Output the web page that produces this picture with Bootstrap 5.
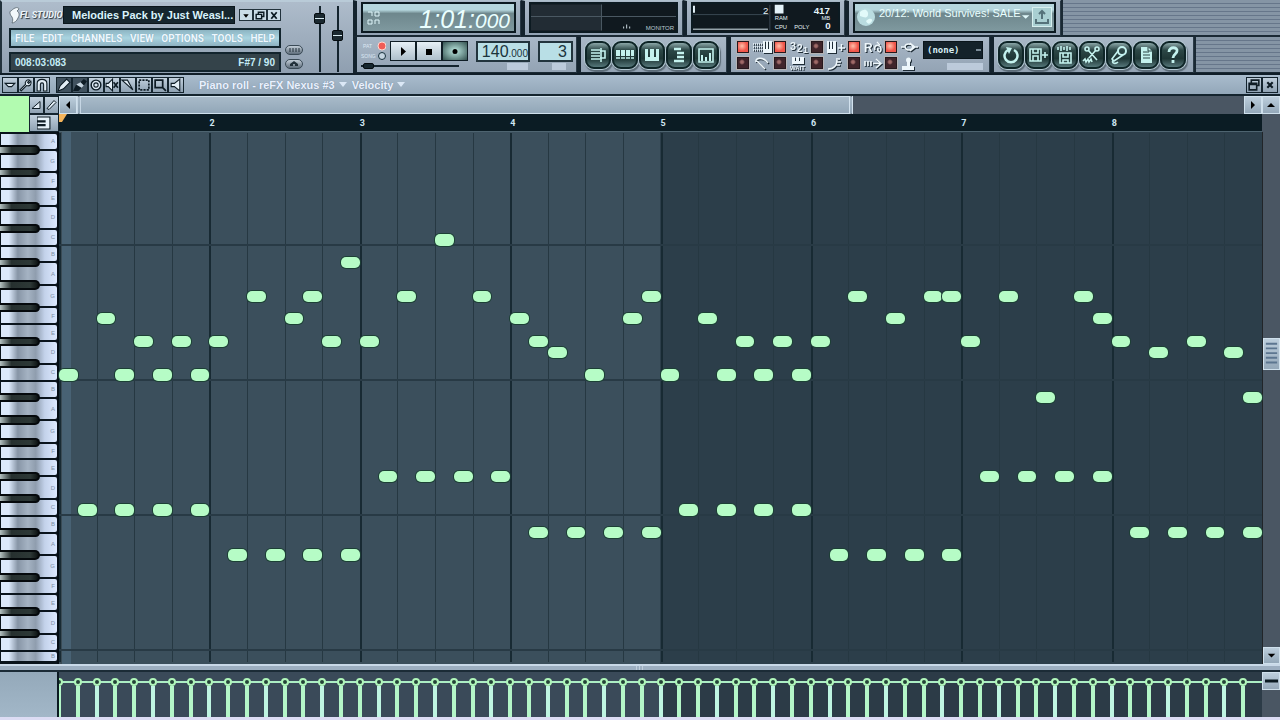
<!DOCTYPE html>
<html lang="en">
<head>
<meta charset="utf-8">
<meta name="viewport" content="width=device-width, initial-scale=1">
<title>FL Studio - Piano roll</title>
<link rel="stylesheet" href="https://cdn.jsdelivr.net/npm/bootstrap@5.3.0/dist/css/bootstrap.min.css">
<style>
:root{--steel:#9aa9b9;--sans:"Liberation Sans",Arial,sans-serif;--slim:Roboto,"Liberation Sans",sans-serif}
body{background:#2c3e4a;font-family:var(--sans);font-size:12px;line-height:1;overflow-x:hidden}
button,select,input{padding:0;margin:0;border-radius:0;font-family:inherit}
svg{display:block}
.deck{background:var(--steel);border-bottom:2px solid #101e28;height:75px;overflow:hidden}
.main-panel{width:353px;background:linear-gradient(#aebccb,#8f9fb0);border-top:2px solid #b9cbd8;border-left:2px solid #22323c;padding-left:7px}
.main-left{width:272px}
.brand{width:54px;font:italic bold 9px var(--slim);color:#eef6fa;text-shadow:1px 1px 1px #22303a}
.song{background:#16262e;color:#d9f3fb;font:bold 11px var(--sans);height:18px;border:1px solid #0b161c;min-width:0}
.tiny{width:14px;height:12px;background:#cbdde8;border:1px solid #22323c;color:#0b1a22}
.menu-strip{height:20px;border:2px solid #12242d;background:linear-gradient(#8db4c2,#a9d4e0 50%,#8eb2c2)}
.menu-strip button{background:none;border:0;color:#eef8ff;font:bold 10px var(--slim);text-shadow:0 0 1px #7294a8}
.hint{height:20px;border:2px solid #12242d;background:#34434a;color:#c4ecf6;font:bold 10px var(--sans)}
.pill{width:18px;height:10px;border-radius:5px;border:1px solid #3a4a56;background:linear-gradient(#c3ced8,#5d6c7a)}
.fader{width:18px;height:66px}
.fader input{width:66px;height:12px;transform:rotate(-90deg);flex-shrink:0}
input[type=range]{appearance:none;-webkit-appearance:none;background:none}
input[type=range]::-webkit-slider-runnable-track{height:2px;background:#14242e}
input[type=range]::-webkit-slider-thumb{-webkit-appearance:none;width:11px;height:11px;margin-top:-5px;border:1px solid #050c10;border-radius:2px;background:linear-gradient(90deg,#1b2930 40%,#d5e8ee 40% 60%,#1b2930 60%)}
.tempo-slide{width:98px;height:8px}
.tempo-slide::-webkit-slider-thumb{height:6px!important;margin-top:-2px!important;background:#16262e!important}
.pan{background:linear-gradient(#a9b8c7,#93a3b4);border-left:4px solid #14232d;border-right:1px solid #2a3a46;height:37px;border-bottom:2px solid #1a2934}
.pan-top{border-top:1px solid #aebfcc}
.ridges{height:37px;border-bottom:2px solid #1a2934;border-left:2px solid #1a2934;background:repeating-linear-gradient(#8595a5 0 3px,#66768a 3px 4px)}
.w-a{width:168px}.w-b{width:162px}.w-c{width:162px}.w-d{width:216px}
.w-e{width:224px}.w-f{width:150px}.w-g{width:263px}.w-h{width:204px}
.screen{border:2px solid #0c1a21;height:31px;margin-top:1px}
.lcd{background:linear-gradient(#b5d6dd 0 22%,#6e878d 35%,#7f999f);color:#eaffff;font:italic 25px var(--sans)}
.lcd small{font-size:21px}
.lcd-time{padding-top:3px}
.blk{background:#10191f;color:#dcecf4}
.play{width:26px;height:20px;border:1px solid #0f1d25;background:linear-gradient(#e6f0f6,#aebfcb)}
.play.rec-on{background:radial-gradient(#bdeae2,#33514f)}
.num{height:21px;border:2px solid #22343d;background:#b9dfe6;color:#1a343c;font:16px var(--sans);line-height:17px}
.num span{font-size:10px}
.tag{height:7px;background:#c6d3e4;opacity:.8}
.tempo{width:54px}.patnum{width:35px}.tg1{width:21px}.tg2{width:14px}
.news{font:11px var(--sans);line-height:12px;padding-top:3px}
.dl{width:20px;height:20px;margin:3px 2px;background:#a9cfd2;border:1px solid #d7f0f0}
.orbs{gap:1px;padding-left:4px}
.orb{width:26px;height:28px;flex-shrink:0;padding:1px;border:2px solid #0e2527;border-radius:9px;background:linear-gradient(#8ba7a8,#2c4746 30%,#1f3736 65%,#56777a);box-shadow:0 0 0 1px #b4c8d2,1px 2px 1px 1px #5c6c78;color:#c4f2ee}
.orb svg{width:20px;height:20px}
.led{appearance:none;-webkit-appearance:none;width:12px;height:12px;border:1px solid #26191e;outline:1px solid #b6b2b4;background:radial-gradient(circle at 40% 40%,#a06a68 0 15%,#40242a 35%)}
.led:checked{background:radial-gradient(circle at 40% 40%,#ffc0aa,#f0564a 60%)}
.opts{width:192px;padding-left:6px;row-gap:1px}
.opt{width:37px;gap:4px}
.opt svg{width:19px;height:13px;color:#edf6fb;filter:drop-shadow(1px 1px 0 #1d2b35)}
.pat{width:60px;height:18px;background:linear-gradient(#7b8c98,#7b8c98) 52px 7px/5px 2px no-repeat #14222a;color:#d8eef4;border:1px solid #0a151b;font:bold 9px "DejaVu Sans Mono",monospace;appearance:none;-webkit-appearance:none;padding-left:3px}
.titlebar{height:21px;background:linear-gradient(#a9bccd,#93a7b9);border-bottom:2px solid #14242e;padding:0 2px}
.tool{width:16px;height:16px;border:1px solid #14242e;background:linear-gradient(#c1d0dd,#8fa2b3);color:#0e1c25}
.tool.down{background:#41525f;color:#eef6fa}
.tool svg{width:14px;height:14px}
.toolset{margin-left:6px}
.caption{padding-left:15px}
.caption button{background:none;border:0;color:#eaf1ff;font:bold 11px var(--sans);text-shadow:0 0 1px #6a7f92}
.left-col{width:59px}.right-col{width:18px}
.upper{height:36px}
.swatch{width:29px;flex-shrink:0;background:#b2fbb0}
.half{width:15px}
.thumb-h{flex:0 1 64.500%;background:linear-gradient(#a8bac9,#92a7b8);border:1px solid #cfe0ec;border-right:4px double #d2e2ee;border-left:4px double #c6d6e4}
.track{background:#4a5663}
.sbtn{background:linear-gradient(#bccedc,#94a8b9);border:1px solid #cfe0ec;color:#0b1a22}
.side-arrow{width:18px;height:18px}
.ruler{height:18px;background:#0b1c24;color:#cfe6f2;border-bottom:1px solid #4e6470;display:grid;grid-template-columns:repeat(8,1fr);font:bold 9px var(--slim);line-height:18px}
.marker{width:8px;height:9px}
.keys{display:grid;grid-template-rows:repeat(94,1fr);grid-template-columns:40px 1fr;border-right:2px solid #050d14;padding:1px 0 2px;background:#0a141c}
.wkey{grid-column:1/3;min-height:0;margin:1px 0 1px 1px;border-radius:0 2px 2px 0;background:linear-gradient(90deg,#dce9fb 0 14%,#8795a6 30%,#a5b3c3 48%,#8f9dae 62%,#c3d2ea 78%,#dde9ff);display:flex;align-items:center;justify-content:flex-end;padding-right:2px;font-size:6px;color:#8091a8}
.bkey{grid-column:1;min-height:0;margin:1px 0;z-index:1;border:2px solid #05090c;border-left:0;border-radius:0 5px 5px 0;background:linear-gradient(90deg,#b5c2c2,#26302f 30%,#2d3836 80%,#0c1212)}
.score{display:grid;grid-template-columns:repeat(64,1fr);grid-template-rows:repeat(47,1fr);padding:1px 0 2px;background:linear-gradient(90deg,#3a4b55 0 3px,#486274 3px 1%,#3b4f5c 1% 50%,#2c3e4a 50%);min-width:0}
.beat{grid-row:1/-1;border-left:1px solid #263842}
.beat.bar{border-left:2px solid #182a33}
.oct{grid-column:1/-1;border-bottom:2px solid #283a45}
.note{min-width:0;min-height:0;border-radius:5px;background:#b6fcc6;box-shadow:0 0 0 1px #1c4035;z-index:1}
.vspace-a{flex:205 0 0}.vspace-b{flex:276 0 0}.vthumb{height:32px}
.split{height:8px;background:#9dafc1;border-top:2px solid #c9d9e8;border-bottom:2px solid #1b2b36}
.lane{height:48px;border-bottom:3px solid #dcdcf4}
.vel-side{background:linear-gradient(#94a9ba,#a2b7c8);border-right:2px solid #0b1a22}
.vels{display:grid;grid-template-columns:repeat(64,1fr);overflow:hidden;background:linear-gradient(#aceec4,#aceec4) 0 9px/100% 2px no-repeat,linear-gradient(90deg,#3a4a59 0 50%,#2c3b47 50%)}
.vel{margin-top:6px;width:8px;margin-left:-4px}
.vel::before{content:"";display:block;width:8px;height:8px;border:2px solid #b0f6ba;border-radius:50%;background:#244238}
.vel::after{content:"";display:block;width:4px;height:31px;margin-left:2px;background:#b4f6c8}
.vel:nth-child(3n)::after{background:#bff5e2}
</style>
</head>
<body>
<div class="d-flex flex-column min-vh-100">

<header class="deck d-flex flex-shrink-0">
  <section class="main-panel d-flex flex-shrink-0">
    <div class="main-left d-flex flex-column flex-shrink-0 pt-1 gap-1 justify-content-between pb-1">
      <div class="d-flex align-items-center">
        <div class="brand d-flex align-items-center flex-shrink-0">
          <svg class="flex-shrink-0" width="11" height="17" viewBox="0 0 11 17"><path d="M6 1C8 0 10 1 10 2L8 4c2 1 3 4 1 7-1 3-4 5-6 5 1-2 1-4 0-6C1 8 0 4 2 4c1-1 2-2 4-3z" fill="#f2f8fb" stroke="#46545e" stroke-width=".7"/></svg><span class="text-nowrap">FL STUDIO</span></div>
        <div class="song flex-fill text-nowrap d-flex align-items-center ps-2">Melodies Pack by Just Weasl...</div>
        <div class="d-flex ms-1 flex-shrink-0">
          <button class="tiny" aria-label="Minimize"><svg viewBox="0 0 11 10"><path d="M3 4h5l-2.500 3z"/></svg></button>
          <button class="tiny" aria-label="Restore"><svg viewBox="0 0 11 10"><path d="M4 4V2h5v4H7M2 4h5v4H2z" fill="none" stroke="currentColor" stroke-width="1.300"/></svg></button>
          <button class="tiny" aria-label="Close"><svg viewBox="0 0 11 10"><path d="M3 2l5 6M8 2L3 8" stroke="currentColor" stroke-width="1.600"/></svg></button>
        </div>
      </div>
      <nav class="menu-strip d-flex align-items-center justify-content-between px-1 flex-shrink-0">
        <button>FILE</button><button>EDIT</button><button>CHANNELS</button><button>VIEW</button><button>OPTIONS</button><button>TOOLS</button><button>HELP</button>
      </nav>
      <div class="hint d-flex align-items-center justify-content-between px-1 flex-shrink-0"><span>008:03:083</span><span>F#7 / 90</span></div>
    </div>
    <div class="d-flex flex-column justify-content-end gap-1 pb-1 ms-1">
      <button class="pill" aria-label="Typing keyboard"><svg viewBox="0 0 16 8"><path d="M4 2v4M7 2v4M10 2v4M13 2v4" stroke="#22303a"/></svg></button>
      <button class="pill" aria-label="Follow playback"><svg viewBox="0 0 16 8"><path d="M4 6V4l4-3 4 3v2H9V4H7v2z" fill="#22303a"/></svg></button>
    </div>
    <div class="d-flex ps-2 pt-1">
      <label class="fader d-flex align-items-center justify-content-center"><input type="range" aria-label="Volume" min="0" max="100" value="88"></label>
      <label class="fader d-flex align-items-center justify-content-center"><input type="range" aria-label="Pitch" min="0" max="100" value="57"></label>
    </div>
  </section>

  <div class="flex-fill d-flex flex-column">
    <div class="d-flex">
      <section class="pan pan-top w-a px-1"><div class="screen lcd d-flex align-items-center justify-content-between px-1">
        <svg width="14" height="16" viewBox="0 0 14 16" fill="none" stroke="#dff6fa"><path d="M1 2h4v4M8 2h4v4H8zM1 10h4v4H1zM8 14v-4h4v4"/></svg>
        <span class="text-nowrap lcd-time">1:01:<small>000</small></span></div></section>
      <section class="pan pan-top w-b px-1"><div class="screen blk d-flex">
        <svg class="w-100 h-100" viewBox="0 0 144 26"><path d="M0 0h70v26H0z" fill="#222c34"/><path d="M70 0v26M0 12h144" stroke="#4a5862"/><path d="M92 24v-2m3 2v-4m3 4v-2" stroke="#c7d5dc"/><text x="114" y="25" font-size="6" fill="#b9c9d2" font-family="Liberation Sans">MONITOR</text></svg></div></section>
      <section class="pan pan-top w-c px-1"><div class="screen blk d-flex">
        <svg class="w-100 h-100" viewBox="0 0 149 26" fill="#e4f2f8" font-family="Liberation Sans" font-size="6"><path d="M0 1h2v7H0zM84 0h9v9h-9z"/><path d="M0 25h77" stroke="#dcecf4"/><path d="M0 10h78M79 0v26" stroke="#3a4852"/><text x="72" y="9" font-size="10">2</text><text x="124" y="9" font-size="10" font-weight="bold">417</text><text x="84" y="16">RAM</text><text x="132" y="16">MB</text><text x="84" y="25">CPU</text><text x="104" y="25">POLY</text><text x="136" y="25" font-size="10" font-weight="bold">0</text></svg></div></section>
      <section class="pan pan-top w-d px-1"><div class="screen lcd d-flex align-items-start justify-content-between">
        <svg class="flex-shrink-0" width="24" height="24" viewBox="0 0 24 24"><circle cx="11" cy="13" r="9" fill="#b9dce0"/><path d="M5 8c5-5 9-1 8 3s-4 2-8 1zM11 17c4-4 7-2 6 0-2 3-4 4-6 0z" fill="#e2fafa"/></svg>
        <span class="news text-nowrap fst-normal">20/12: World Survives! SALE</span>
        <svg class="mt-2" width="10" height="10" viewBox="0 0 10 10"><path d="M1 3h8L5 7z" fill="#e0f8fa"/></svg>
        <button class="dl" aria-label="Download"><svg width="18" height="18" viewBox="0 0 18 18"><path d="M9 3v8M6 6l3-3 3 3M3 11v4h12v-4" fill="none" stroke="#55727a" stroke-width="2"/></svg></button></div></section>
      <div class="ridges flex-fill"></div>
    </div>
    <div class="d-flex">
      <section class="pan w-e ps-1 d-flex flex-column pt-1">
        <div class="d-flex">
          <svg class="me-1" width="25" height="20" viewBox="0 0 25 20" fill="#dce8f4" font-family="Liberation Sans" font-size="5"><text x="2" y="7">PAT</text><text x="0" y="17">SONG</text><circle cx="21" cy="5" r="4" fill="#f05c56" stroke="#ffd8d0"/><circle cx="21" cy="15" r="3.500" fill="#c4d4e0" stroke="#17303c"/></svg>
          <button class="play" aria-label="Play"><svg viewBox="0 0 24 17"><path d="M10 4v9l5-4.500z"/></svg></button>
          <button class="play" aria-label="Stop"><svg viewBox="0 0 24 17"><path d="M9 6h6v6H9z"/></svg></button>
          <button class="play rec-on" aria-label="Record"><svg viewBox="0 0 24 17"><circle cx="12" cy="8.500" r="2.500"/></svg></button>
          <div class="num ms-2 text-end text-nowrap tempo">140<span>.000</span></div>
          <div class="num ms-2 text-end pe-1 patnum">3</div>
        </div>
        <div class="d-flex align-items-center"><input class="tempo-slide" type="range" aria-label="Song position" value="2"><span class="tag ms-5 tg1"></span><span class="tag ms-4 tg2"></span></div>
      </section>
      <section class="pan w-f d-flex align-items-center orbs" id="windows"></section>
      <section class="pan w-g d-flex pt-1">
        <div class="opts d-flex flex-wrap" id="opts"></div>
        <div class="flex-shrink-0"><select class="pat" aria-label="Pattern"><option>(none)</option></select><div class="tag ms-4 mt-1"></div></div>
      </section>
      <section class="pan w-h d-flex align-items-center orbs" id="actions"></section>
      <div class="ridges flex-fill"></div>
    </div>
  </div>
</header>

<main class="flex-fill d-flex flex-column">
  <div class="titlebar d-flex align-items-center flex-shrink-0">
    <div class="d-flex" id="tools1"></div>
    <div class="d-flex toolset" id="tools2"></div>
    <div class="caption d-flex align-items-center gap-1">
      <button>Piano roll - reFX Nexus #3</button><svg width="9" height="6" viewBox="0 0 9 6"><path d="M0 0h8L4 5z" fill="#dbe8f6"/></svg>
      <button>Velocity</button><svg width="9" height="6" viewBox="0 0 9 6"><path d="M0 0h8L4 5z" fill="#dbe8f6"/></svg>
    </div>
    <div class="d-flex ms-auto">
      <button class="tool" aria-label="Detach"><svg viewBox="0 0 13 13"><path d="M4 5V2h7v5H9M2 5h7v6H2zM2 6h7" fill="none" stroke="currentColor" stroke-width="1.500"/></svg></button>
      <button class="tool" aria-label="Close"><svg viewBox="0 0 13 13"><path d="M4 4l5 5M9 4L4 9" stroke="currentColor" stroke-width="2"/></svg></button>
    </div>
  </div>

  <div class="upper d-flex flex-shrink-0">
    <div class="left-col d-flex flex-shrink-0"><div class="swatch"></div>
      <div class="flex-fill d-flex flex-column"><div class="d-flex flex-fill">
        <button class="tool half h-100" aria-label="Ramp"><svg class="w-100" viewBox="0 0 13 13"><path d="M2 10l8-7v7z" fill="#e3eef6" stroke="currentColor"/></svg></button>
        <button class="tool half h-100" aria-label="Line"><svg class="w-100" viewBox="0 0 13 13"><path d="M2 10l7-8 2 2-7 7z" fill="#e3eef6" stroke="currentColor"/></svg></button></div>
        <button class="tool w-100 flex-fill d-flex justify-content-center align-items-center" aria-label="Keyboard view"><svg viewBox="0 0 13 13"><path d="M0 1h12v11H0z" fill="#e6f2fa" stroke="currentColor"/><path d="M0 5h8M0 8.500h8" stroke="currentColor" stroke-width="2"/></svg></button></div></div>
    <div class="flex-fill d-flex flex-column">
      <div class="d-flex flex-fill track">
        <button class="sbtn side-arrow" aria-label="Scroll left"><svg viewBox="0 0 16 16"><path d="M10 4v8L6 8z"/></svg></button>
        <div class="thumb-h"></div>
        <button class="sbtn side-arrow ms-auto" aria-label="Scroll right"><svg viewBox="0 0 16 16"><path d="M6 4v8l4-4z"/></svg></button>
      </div>
      <div class="ruler" id="ruler"></div>
    </div>
    <div class="right-col track d-flex flex-column flex-shrink-0"><button class="sbtn" aria-label="Scroll up"><svg viewBox="0 0 16 16"><path d="M4 10h8L8 6z"/></svg></button></div>
  </div>

  <div class="d-flex flex-fill">
    <div class="left-col keys flex-shrink-0" id="keys"></div>
    <div class="score flex-fill" id="score"></div>
    <div class="right-col track d-flex flex-column flex-shrink-0 border-start border-dark">
      <div class="vspace-a"></div>
      <div class="vthumb sbtn"><svg viewBox="0 0 16 30"><path d="M2 5h12M2 10h12M2 15h12M2 20h12M2 25h12" stroke="#5c7690" stroke-width="2"/></svg></div>
      <div class="vspace-b"></div>
      <button class="sbtn" aria-label="Scroll down"><svg viewBox="0 0 16 16"><path d="M4 6h8l-4 4z"/></svg></button>
    </div>
  </div>

  <div class="split flex-shrink-0 d-flex justify-content-center"><svg width="10" height="4" viewBox="0 0 10 4"><path d="M1 1h1M4 1h1M7 1h1M1 3h1M4 3h1M7 3h1" stroke="#dfeaf4"/></svg></div>
  <div class="lane d-flex flex-shrink-0">
    <div class="left-col vel-side flex-shrink-0"></div>
    <div class="vels flex-fill" id="vels"></div>
    <div class="right-col track d-flex flex-column flex-shrink-0"><button class="sbtn" aria-label="Resize lane"><svg viewBox="0 0 16 16"><path d="M2 8h13" stroke="currentColor" stroke-width="3"/></svg></button></div>
  </div>
</main>
</div>
<script src="https://cdn.jsdelivr.net/npm/bootstrap@5.3.0/dist/js/bootstrap.bundle.min.js"></script>
<script>
const byId = id => document.getElementById(id);
const line = (d, extra='') => `<path d="${d}" fill="none" stroke="currentColor" stroke-width="1.6" ${extra}/>`;
const solid = d => `<path d="${d}" fill="currentColor"/>`;

/* round window and action buttons */
const orb = ([name, art]) => `<button class="orb" aria-label="${name}"><svg viewBox="0 0 20 20">${art}</svg></button>`;
byId('windows').innerHTML = [
  ['Playlist', line('M3 5h9M3 8h9M3 11h9M3 14h9M13 3v14M12 6h5v7h-5')],
  ['Step sequencer', solid('M1 5h4v6H1zM6 5h4v6H6zM11 5h4v6h-4zM16 5h3v6h-3z') + line('M1 13h4M6 13h4M11 13h4M16 13h3')],
  ['Piano roll', solid('M3 4h3v8h2V4h4v8h2V4h3v12H3z')],
  ['Browser', '<path d="M5 4h7M8 8h7M8 12h7M5 16h10" stroke="currentColor" stroke-width="2.400"/>'],
  ['Mixer', line('M3 4h14v13H3z') + line('M6 16v-6M10 16v-4M14 16V8', 'style="stroke-width:2"')]
].map(orb).join('');
byId('actions').innerHTML = [
  ['Undo', `<path d="M7 5a6.500 6.500 0 1 0 6 0" fill="none" stroke="currentColor" stroke-width="2.500"/>` + solid('M5 2l6 1-3 6z')],
  ['Save', line('M2 4h11v12H2zM5 4v4h5V4M5 16v-5h5v5M14 10h6M17 7v6')],
  ['Render', line('M3 2v3M6 1v5M9 2v3M12 1v5M15 2v3M5 8h11v10H5zM8 8v4h5V8M8 18v-3h5v3')],
  ['Edit audio', line('M6 5l9 10M14 5l-7 8M1 16l2-2 1 3 2-3 1 3 2-3 1 3') + `<circle cx="5" cy="4" r="2" fill="none" stroke="currentColor" stroke-width="1.600"/><circle cx="15" cy="4" r="2" fill="none" stroke="currentColor" stroke-width="1.600"/>`],
  ['Record', `<circle cx="13" cy="6" r="4" fill="none" stroke="currentColor" stroke-width="2"/>` + line('M9 6l-6 8 2 2 9-6M4 15c-2 4 3 4 5 2')],
  ['Notes', solid('M5 2h7l4 4v12H5z') + '<path d="M7 7h6M7 10h7M7 13h7M12 2v4h4" stroke="#2c4746" fill="none"/>'],
  ['Help', '<path d="M6 7c0-6 9-5 8-1 0 3-4 3-4 7M10 15v3" fill="none" stroke="currentColor" stroke-width="2.800"/>']
].map(orb).join('');

/* recording and typing switches */
byId('opts').innerHTML = [
  ['Typing keyboard', 1, solid('M10 0h2v8h1V0h2v8h1V0h3v12h-9z') + line('M0 3h9M0 6h9M0 9h9','stroke-dasharray="1 1"')],
  ['Countdown', 1, '<g fill="currentColor" font-family="Liberation Sans" font-weight="bold"><text x="0" y="9" font-size="11">3</text><text x="7" y="11" font-size="10">2</text><text x="13" y="12" font-size="9">1</text></g>'],
  ['Blend recording', 0, solid('M0 0h2v8h1V0h2v8h1V0h3v12H0z') + line('M11 7h7M14.500 3v7')],
  ['Loop record', 1, '<text x="0" y="11" font-size="12" font-weight="bold" fill="currentColor" font-family="Liberation Sans">R</text>' + line('M11 9c-2-6 6-6 6-1s-4 3-3-1M13 1l3 3')],
  ['Link', 1, line('M0 6h4M12 6h5M4 6c0-4 7-4 8 0-1 4-7 4-8 0zM9 2l5 4-5 4')],
  ['Multilink', 0, line('M4 4l8 8M3 5c-1-5 8-5 12 1')],
  ['Wait for input', 0, solid('M2 0h3v4h1V0h3v4h1V0h4v7H2z') + '<text x="0" y="13" font-size="6" font-weight="bold" fill="currentColor" font-family="Liberation Sans">WAIT</text>'],
  ['Step edit', 0, line('M1 12c6 0 9-4 9-9M9 2h4M10 5h4M9 8h4')],
  ['Scroll', 0, line('M1 4v5M4 4v5M7 4v5M9 6.500h7M12 2l5 4.500-5 4.500')],
  ['Joystick', 0, solid('M1 9h12v4H1zM6 3h3v7H6z') + '<circle cx="7.500" cy="3" r="2.500" fill="currentColor"/>']
].map(([n, on, art]) => `<label class="opt d-flex"><input class="led" type="checkbox" aria-label="${n}" ${on ? 'checked' : ''}><svg viewBox="0 0 19 13">${art}</svg></label>`).join('');

/* piano roll tools */
const tool = ([name, art, down]) => `<button class="tool ${down ? 'down' : ''}" aria-label="${name}"><svg viewBox="0 0 13 13">${art}</svg></button>`;
byId('tools1').innerHTML = [
  ['Options', '<path d="M2 5h9L8 8H5z" fill="#e3eef6" stroke="currentColor"/>'],
  ['Tools', '<path d="M2 12l-1-1 5-5c-1-3 2-5 4-4L8 4l1 1 2-2c1 3-1 5-4 4z" fill="#e3eef6" stroke="currentColor"/>'],
  ['Snap', '<path d="M2 12V5c0-5 9-5 9 0v7H8V6c0-2-3-2-3 0v6z" fill="#e3eef6" stroke="currentColor"/>']
].map(tool).join('');
byId('tools2').innerHTML = [
  ['Draw', '<path d="M1 12l2-5 6-6 3 3-6 6z" fill="#e3eef6" stroke="#0e1c25"/>', 1],
  ['Paint', '<path d="M0 12l3-6 5 3-3 3zM7 4l3-3 3 2-3 4z" fill="#0e1c25"/><path d="M3 6l4-2 3 3-2 2z" fill="#c5d4df"/>', 1],
  ['Delete', '<circle cx="6.500" cy="6.500" r="4.500" fill="#dbe8f2" stroke="currentColor" stroke-width="1.300"/><circle cx="6.500" cy="6.500" r="2" fill="none" stroke="currentColor"/>'],
  ['Mute', '<path d="M1 5h2l4-4v11L3 8H1z" fill="#e3eef6" stroke="currentColor"/>' + line('M8 4l4 5M12 4L8 9')],
  ['Slice', '<path d="M1 2h5l5 9z" fill="#e3eef6" stroke="currentColor"/>'],
  ['Select', line('M2 2h9v9H2z','stroke-dasharray="2 1"')],
  ['Zoom', line('M2 2h7v7H2zM9 9l3 3')],
  ['Playback', '<path d="M2 5h3l5-4v11L5 8H2z" fill="#e3eef6" stroke="currentColor"/>']
].map(tool).join('');

/* bar numbers */
byId('ruler').innerHTML = Array.from({length: 8}, (_, i) =>
  i ? `<span>${i + 1}</span>` : '<svg class="marker" viewBox="0 0 8 9"><path d="M0 0h8L3 8H0z" fill="#f5b45a"/></svg>').join('');

/* keyboard, in half rows, from high A down to the clipped B */
const spans = {B: 3, A: 4, G: 4, F: 3, E: 3, D: 4, C: 3};
const run = 'AGFEDC' + 'BAGFEDC'.repeat(3) + 'B';
let keys = '', row = 1;
[...run].forEach((k, i) => {
  const last = i === run.length - 1;
  const h = i === 0 ? 3 : last ? 2 : spans[k];
  keys += `<div class="wkey" style="grid-row:${row}/span ${h}">${k}</div>`;
  row += h;
  if ('BAGED'.includes(k) && !last) keys += `<div class="bkey" style="grid-row:${row - 1}/span 2"></div>`;
});
byId('keys').innerHTML = keys;

/* notes: row -> steps */
const notes = {
  9: [20], 11: [15], 14: [10,13,18,22,31,42,46,47,50,54], 16: [2,12,24,30,34,44,55],
  18: [4,6,8,14,16,25,36,38,40,48,56,60], 19: [26,58,62], 21: [0,3,5,7,28,32,35,37,39], 23: [52,63],
  30: [17,19,21,23,49,51,53,55], 33: [1,3,5,7,33,35,37,39], 35: [25,27,29,31,57,59,61,63], 37: [9,11,13,15,41,43,45,47]
};
let score = '';
for (let b = 0; b < 32; b++) score += `<div class="beat ${b % 4 ? '' : 'bar'}" style="grid-column:${b * 2 + 1}/span 2"></div>`;
for (const r of [10, 22, 34, 46]) score += `<div class="oct" style="grid-row:${r}"></div>`;
for (const r in notes) for (const s of notes[r]) score += `<div class="note" style="grid-area:${+r + 1}/${s + 1}"></div>`;
byId('score').innerHTML = score;
byId('vels').innerHTML = '<div class="vel"></div>'.repeat(64);
</script>
</body>
</html>
